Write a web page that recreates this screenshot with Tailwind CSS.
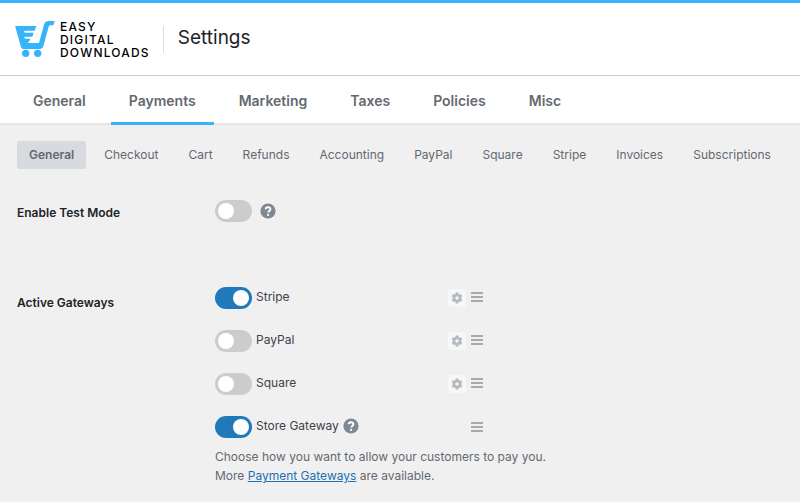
<!DOCTYPE html>
<html lang="en">
<head>
    <meta charset="UTF-8">
    <meta name="viewport" content="width=device-width, initial-scale=1.0">
    <title>Settings - Easy Digital Downloads</title>
    <script src="https://cdn.jsdelivr.net/npm/@tailwindcss/browser@4"></script>
</head>
<body class="min-h-screen bg-[#f0f0f1] font-['Inter',sans-serif] text-[#3c434a]">
    <!-- Shared icons -->
    <svg class="hidden" aria-hidden="true">
        <symbol id="icon-help" viewBox="0 0 16 16">
            <circle cx="8" cy="8" r="7.6" fill="#7e8993" />
            <path d="M5.7 6.3C5.7 4.9 6.7 4.2 8 4.2s2.4.8 2.4 2c0 1.7-2.2 1.7-2.2 3.4" fill="none" stroke="#fff" stroke-width="1.9" />
            <circle cx="8.1" cy="11.9" r="1.1" fill="#fff" />
        </symbol>
        <symbol id="icon-gear" viewBox="0 0 12 12">
            <circle cx="6" cy="6" r="3" fill="none" stroke="#b4b9c2" stroke-width="2.6" />
            <path d="M6 .6v2M6 9.4v2M1.3 3.3l1.7 1M9 7.7l1.7 1M1.3 8.700l1.700-1M9 4.300l1.700-1" stroke="#b4b9c2" stroke-width="2.8" />
        </symbol>
        <symbol id="icon-bars" viewBox="0 0 12 10">
            <path d="M0 1h12M0 5h12M0 9h12" stroke="#aaa" stroke-width="2" />
        </symbol>
    </svg>

    <header class="flex h-[76px] items-center border-t-3 border-b border-t-[#35b3fb] border-b-[#ccc] bg-white px-[15px]">
        <svg class="mt-[2px] h-[38px] w-10" viewBox="0 0 120 114" fill="#35b3fb" aria-hidden="true">
            <path d="M3 15h61l-5 14H32q-6 0-5 3t5 3h24l-4 12H32q-5 0-4 3t5 3h13q-2 7-8 13h34L87 11Q90 0 101 0h18l-4 13h-9q-4 0-5 4L85 76q-2 8-9 8H25q-6 0-7-6L1 18q-1-3 2-3z" />
            <circle cx="32" cy="97" r="11" />
            <circle cx="68" cy="97" r="11" />
        </svg>
        <div class="ml-[5px] text-[12px] leading-[13px] font-medium tracking-widest text-black">
            <p>EASY</p>
            <p>DIGITAL</p>
            <p>DOWNLOADS</p>
        </div>
        <h1 class="ml-[13px] border-l border-[#ddd] pb-[3px] pl-[14px] text-[19px] leading-6 text-[#1d2327]">Settings</h1>
    </header>

    <nav class="flex h-[49px] gap-[7px] border-b-2 border-[#e5e5e5] bg-white px-[15px] text-[14px] font-semibold text-[#646970]" aria-label="Settings sections">
        <a href="#" class="-mb-[2px] flex items-center px-[18px]">General</a>
        <a href="#" class="-mb-[2px] flex items-center border-b-3 border-[#35b3fb] px-[18px] pt-[3px]" aria-current="page">Payments</a>
        <a href="#" class="-mb-[2px] flex items-center px-[18px]">Marketing</a>
        <a href="#" class="-mb-[2px] flex items-center px-[18px]">Taxes</a>
        <a href="#" class="-mb-[2px] flex items-center px-[18px]">Policies</a>
        <a href="#" class="-mb-[2px] flex items-center px-[18px]">Misc</a>
    </nav>

    <main class="px-[17px] pt-4 pb-5">
        <nav class="flex gap-[6px] text-[12px] leading-7 text-[#646970]" aria-label="Payments sections">
            <a href="#" class="rounded-xs bg-[#d7dade] px-3 font-semibold" aria-current="page">General</a>
            <a href="#" class="px-3">Checkout</a>
            <a href="#" class="px-3">Cart</a>
            <a href="#" class="px-3">Refunds</a>
            <a href="#" class="px-3">Accounting</a>
            <a href="#" class="px-3">PayPal</a>
            <a href="#" class="px-3">Square</a>
            <a href="#" class="px-3">Stripe</a>
            <a href="#" class="px-3">Invoices</a>
            <a href="#" class="px-3">Subscriptions</a>
        </nav>

        <form class="mt-[31px] grid grid-cols-[198px_1fr] text-[12px] leading-[18px]">
            <label for="test-mode" class="pt-1 font-semibold text-[#1d2327]">Enable Test Mode</label>
            <div class="flex h-[87px] items-start gap-2">
                <input type="checkbox" id="test-mode" class="h-[22px] w-[37px] appearance-none rounded-full bg-[#ccc] p-[3px] before:block before:size-4 before:rounded-full before:bg-white checked:bg-[#2079b9] checked:before:ml-[15px]">
                <button type="button" class="mt-[3px]" aria-label="Help"><svg class="size-4"><use href="#icon-help" /></svg></button>
            </div>

            <h2 class="pt-[7px] font-semibold text-[#1d2327]">Active Gateways</h2>
            <div>
                <ul class="w-[268px] space-y-[21px]">
                    <li class="flex h-[22px] items-center">
                        <input type="checkbox" id="stripe" checked class="h-[22px] w-[37px] appearance-none rounded-full bg-[#ccc] p-[3px] before:block before:size-4 before:rounded-full before:bg-white checked:bg-[#2079b9] checked:before:ml-[15px]">
                        <label for="stripe" class="ml-1 pb-[2px]">Stripe</label>
                        <button type="button" class="ml-auto rounded-xs bg-[#f6f7f7] p-[3px]" aria-label="Stripe settings"><svg class="size-3"><use href="#icon-gear" /></svg></button>
                        <button type="button" class="ml-[5px] pb-[2px]" aria-label="Move Stripe"><svg class="h-[10px] w-3"><use href="#icon-bars" /></svg></button>
                    </li>
                    <li class="flex h-[22px] items-center">
                        <input type="checkbox" id="paypal" class="h-[22px] w-[37px] appearance-none rounded-full bg-[#ccc] p-[3px] before:block before:size-4 before:rounded-full before:bg-white checked:bg-[#2079b9] checked:before:ml-[15px]">
                        <label for="paypal" class="ml-1 pb-[2px]">PayPal</label>
                        <button type="button" class="ml-auto rounded-xs bg-[#f6f7f7] p-[3px]" aria-label="PayPal settings"><svg class="size-3"><use href="#icon-gear" /></svg></button>
                        <button type="button" class="ml-[5px] pb-[2px]" aria-label="Move PayPal"><svg class="h-[10px] w-3"><use href="#icon-bars" /></svg></button>
                    </li>
                    <li class="flex h-[22px] items-center">
                        <input type="checkbox" id="square" class="h-[22px] w-[37px] appearance-none rounded-full bg-[#ccc] p-[3px] before:block before:size-4 before:rounded-full before:bg-white checked:bg-[#2079b9] checked:before:ml-[15px]">
                        <label for="square" class="ml-1 pb-[2px]">Square</label>
                        <button type="button" class="ml-auto rounded-xs bg-[#f6f7f7] p-[3px]" aria-label="Square settings"><svg class="size-3"><use href="#icon-gear" /></svg></button>
                        <button type="button" class="ml-[5px] pb-[2px]" aria-label="Move Square"><svg class="h-[10px] w-3"><use href="#icon-bars" /></svg></button>
                    </li>
                    <li class="flex h-[22px] items-center">
                        <input type="checkbox" id="store" checked class="h-[22px] w-[37px] appearance-none rounded-full bg-[#ccc] p-[3px] before:block before:size-4 before:rounded-full before:bg-white checked:bg-[#2079b9] checked:before:ml-[15px]">
                        <label for="store" class="ml-1 pb-[2px]">Store Gateway</label>
                        <button type="button" class="ml-1 pb-[2px]" aria-label="Help"><svg class="size-4"><use href="#icon-help" /></svg></button>
                        <button type="button" class="ml-auto" aria-label="Move Store Gateway"><svg class="h-[10px] w-3"><use href="#icon-bars" /></svg></button>
                    </li>
                </ul>
                <p class="mt-[9px] leading-[19px] text-[#646970]">
                    Choose how you want to allow your customers to pay you.<br>
                    More <a href="#" class="text-[#2271b1] underline">Payment Gateways</a> are available.
                </p>
            </div>
        </form>
    </main>
</body>
</html>
